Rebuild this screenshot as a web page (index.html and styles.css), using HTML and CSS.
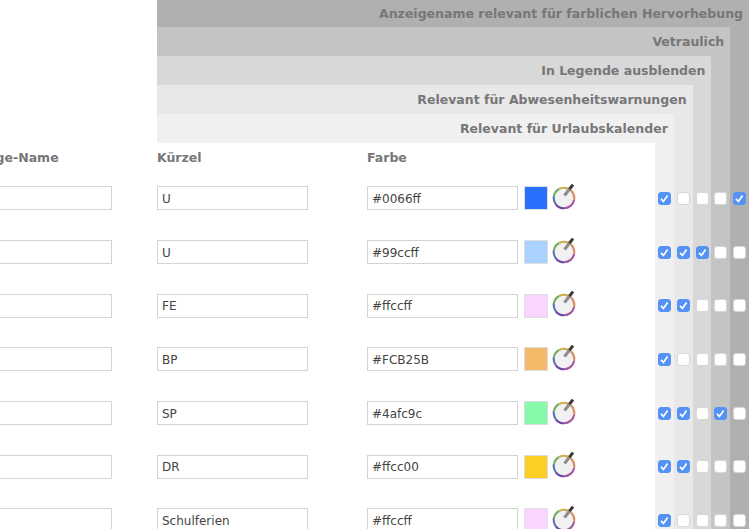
FILE: index.html
```html
<!DOCTYPE html>
<html lang="de">
<head>
  <meta charset="UTF-8" />
  <title>Abwesenheitsarten</title>
  <link rel="stylesheet" href="styles.css">
</head>
<body>

  <svg class="defs" width="0" height="0">
    <symbol id="picker" viewBox="0 0 26 26">
      <circle cx="12" cy="14" r="10" fill="#f1f1f1"/>
      <g fill="none" stroke-width="2.1" transform="rotate(-90 12 14)">
        <circle cx="12" cy="14" r="10.3" pathLength="100" stroke="#d9a24a" stroke-dasharray="12 100"/>
        <circle cx="12" cy="14" r="10.3" pathLength="100" stroke="#d98f63" stroke-dasharray="16 100" stroke-dashoffset="-12"/>
        <circle cx="12" cy="14" r="10.3" pathLength="100" stroke="#a3559f" stroke-dasharray="22 100" stroke-dashoffset="-28"/>
        <circle cx="12" cy="14" r="10.3" pathLength="100" stroke="#6a4aa6" stroke-dasharray="15 100" stroke-dashoffset="-50"/>
        <circle cx="12" cy="14" r="10.3" pathLength="100" stroke="#5a72ae" stroke-dasharray="13 100" stroke-dashoffset="-65"/>
        <circle cx="12" cy="14" r="10.3" pathLength="100" stroke="#72b060" stroke-dasharray="14 100" stroke-dashoffset="-78"/>
        <circle cx="12" cy="14" r="10.3" pathLength="100" stroke="#c4b552" stroke-dasharray="8 100" stroke-dashoffset="-92"/>
      </g>
      <path d="M12.5 11.5L18 4.5" stroke="#8c8c8c" stroke-width="3"/>
      <path d="M17.5 5.2L21 .6" stroke="#3a3a3a" stroke-width="3"/>
    </symbol>
  </svg>

  <div class="band band-1">
    <h3>Anzeigename relevant für farblichen Hervorhebung</h3>
    <div class="band-body">
      <div class="band band-2">
        <h3>Vetraulich</h3>
        <div class="band-body">
          <div class="band band-3">
            <h3>In Legende ausblenden</h3>
            <div class="band-body">
              <div class="band band-4">
                <h3>Relevant für Abwesenheitswarnungen</h3>
                <div class="band-body">
                  <div class="band band-5">
                    <h3>Relevant für Urlaubskalender</h3>
                    <div class="band-body">

                      <div class="form">
                        <div class="form-row form-head">
                          <span>Anzeige-Name</span>
                          <span>Kürzel</span>
                          <span>Farbe</span>
                        </div>
                        <div class="form-row">
                          <input type="text" class="name">
                          <input type="text" value="U">
                          <div class="color">
                            <input type="text" value="#0066ff">
                            <span class="swatch" style="background-color:#2970ff"></span>
                            <svg class="picker"><use href="#picker"/></svg>
                          </div>
                        </div>
                        <div class="form-row">
                          <input type="text" class="name">
                          <input type="text" value="U">
                          <div class="color">
                            <input type="text" value="#99ccff">
                            <span class="swatch" style="background-color:#aad2ff"></span>
                            <svg class="picker"><use href="#picker"/></svg>
                          </div>
                        </div>
                        <div class="form-row">
                          <input type="text" class="name">
                          <input type="text" value="FE">
                          <div class="color">
                            <input type="text" value="#ffccff">
                            <span class="swatch" style="background-color:#f9d5ff"></span>
                            <svg class="picker"><use href="#picker"/></svg>
                          </div>
                        </div>
                        <div class="form-row">
                          <input type="text" class="name">
                          <input type="text" value="BP">
                          <div class="color">
                            <input type="text" value="#FCB25B">
                            <span class="swatch" style="background-color:#f4ba6a"></span>
                            <svg class="picker"><use href="#picker"/></svg>
                          </div>
                        </div>
                        <div class="form-row">
                          <input type="text" class="name">
                          <input type="text" value="SP">
                          <div class="color">
                            <input type="text" value="#4afc9c">
                            <span class="swatch" style="background-color:#85fbaa"></span>
                            <svg class="picker"><use href="#picker"/></svg>
                          </div>
                        </div>
                        <div class="form-row">
                          <input type="text" class="name">
                          <input type="text" value="DR">
                          <div class="color">
                            <input type="text" value="#ffcc00">
                            <span class="swatch" style="background-color:#fbd022"></span>
                            <svg class="picker"><use href="#picker"/></svg>
                          </div>
                        </div>
                        <div class="form-row">
                          <input type="text" class="name">
                          <input type="text" value="Schulferien">
                          <div class="color">
                            <input type="text" value="#ffccff">
                            <span class="swatch" style="background-color:#f9d5ff"></span>
                            <svg class="picker"><use href="#picker"/></svg>
                          </div>
                        </div>
                      </div>

                      <div class="checks">
                        <label><input type="checkbox" checked></label>
                        <label><input type="checkbox" checked></label>
                        <label><input type="checkbox" checked></label>
                        <label><input type="checkbox" checked></label>
                        <label><input type="checkbox" checked></label>
                        <label><input type="checkbox" checked></label>
                        <label><input type="checkbox" checked></label>
                      </div>
                    </div>
                  </div>
                  <div class="checks">
                    <label><input type="checkbox"></label>
                    <label><input type="checkbox" checked></label>
                    <label><input type="checkbox" checked></label>
                    <label><input type="checkbox"></label>
                    <label><input type="checkbox" checked></label>
                    <label><input type="checkbox" checked></label>
                    <label><input type="checkbox"></label>
                  </div>
                </div>
              </div>
              <div class="checks">
                <label><input type="checkbox"></label>
                <label><input type="checkbox" checked></label>
                <label><input type="checkbox"></label>
                <label><input type="checkbox"></label>
                <label><input type="checkbox"></label>
                <label><input type="checkbox"></label>
                <label><input type="checkbox"></label>
              </div>
            </div>
          </div>
          <div class="checks">
            <label><input type="checkbox"></label>
            <label><input type="checkbox"></label>
            <label><input type="checkbox"></label>
            <label><input type="checkbox"></label>
            <label><input type="checkbox" checked></label>
            <label><input type="checkbox"></label>
            <label><input type="checkbox"></label>
          </div>
        </div>
      </div>
      <div class="checks">
        <label><input type="checkbox" checked></label>
        <label><input type="checkbox"></label>
        <label><input type="checkbox"></label>
        <label><input type="checkbox"></label>
        <label><input type="checkbox"></label>
        <label><input type="checkbox"></label>
        <label><input type="checkbox"></label>
      </div>
    </div>
  </div>

</body>
</html>
```

FILE: styles.css
```css
html, body {
  margin: 0;
  height: 100%;
  overflow: hidden;
  background-color: #fff;
}

body {
  font-family: "DejaVu Sans", Verdana, sans-serif;
  font-size: 12px;
  color: #444;
}

.defs {
  display: block;
}

.band-1 {
  margin-left: 157px;
  background-color: #b0b0b0;
}

.band-2 {
  background-color: #c4c4c4;
}

.band-3 {
  background-color: #d8d8d8;
}

.band-4 {
  background-color: #e8e8e8;
}

.band-5 {
  background-color: #f0f0f0;
}

.band h3 {
  margin: 0;
  height: 29px;
  padding-right: 6px;
  font-size: 12.5px;
  line-height: 29px;
  text-align: right;
  color: #777;
}

.band-1 > h3 {
  height: 27px;
  line-height: 27px;
}

.band-body {
  display: flex;
}

.band-body > .band,
.band-body > .form {
  flex: 1;
  min-width: 0;
}

.checks {
  align-self: flex-end;
  flex: 0 0 18.8px;
}

.checks label {
  display: flex;
  align-items: center;
  justify-content: center;
  height: 53.67px;
}

.checks input {
  appearance: none;
  flex: none;
  width: 13px;
  height: 13px;
  margin: 0;
  border: 1px solid #d8d8d8;
  border-radius: 3px;
  background-color: #fff;
}

.checks input:checked {
  border-color: #5592f5;
  background: #5592f5 url("data:image/svg+xml,%3Csvg xmlns='http://www.w3.org/2000/svg' viewBox='0 0 13 13'%3E%3Cpath d='M3 6.8l2.4 2.6L9.6 3.4' fill='none' stroke='%23fff' stroke-width='1.7'/%3E%3C/svg%3E") center / 13px no-repeat;
}

.form {
  margin-left: -200px;
  background-color: #fff;
}

.form-row {
  display: grid;
  grid-template-columns: 200px 210px auto;
  align-items: center;
  height: 53.67px;
}

.form-head {
  height: 28.67px;
  font-size: 12.5px;
  font-weight: bold;
  color: #777;
}

.form-row input {
  box-sizing: border-box;
  width: 151px;
  height: 24px;
  margin: 0;
  padding: 1px 4px 0;
  border: 1px solid #d4d4d4;
  font-family: inherit;
  font-size: 12px;
  color: #444;
  outline: none;
}

.form-row input.name {
  width: 155px;
}

.color {
  display: flex;
  align-items: center;
}

.swatch {
  box-sizing: border-box;
  flex: none;
  width: 24px;
  height: 24px;
  margin-left: 5.5px;
  border: 1px solid #ddd;
}

.picker {
  flex: none;
  width: 26px;
  height: 26px;
  margin-left: 4px;
  margin-bottom: 3px;
}
```
